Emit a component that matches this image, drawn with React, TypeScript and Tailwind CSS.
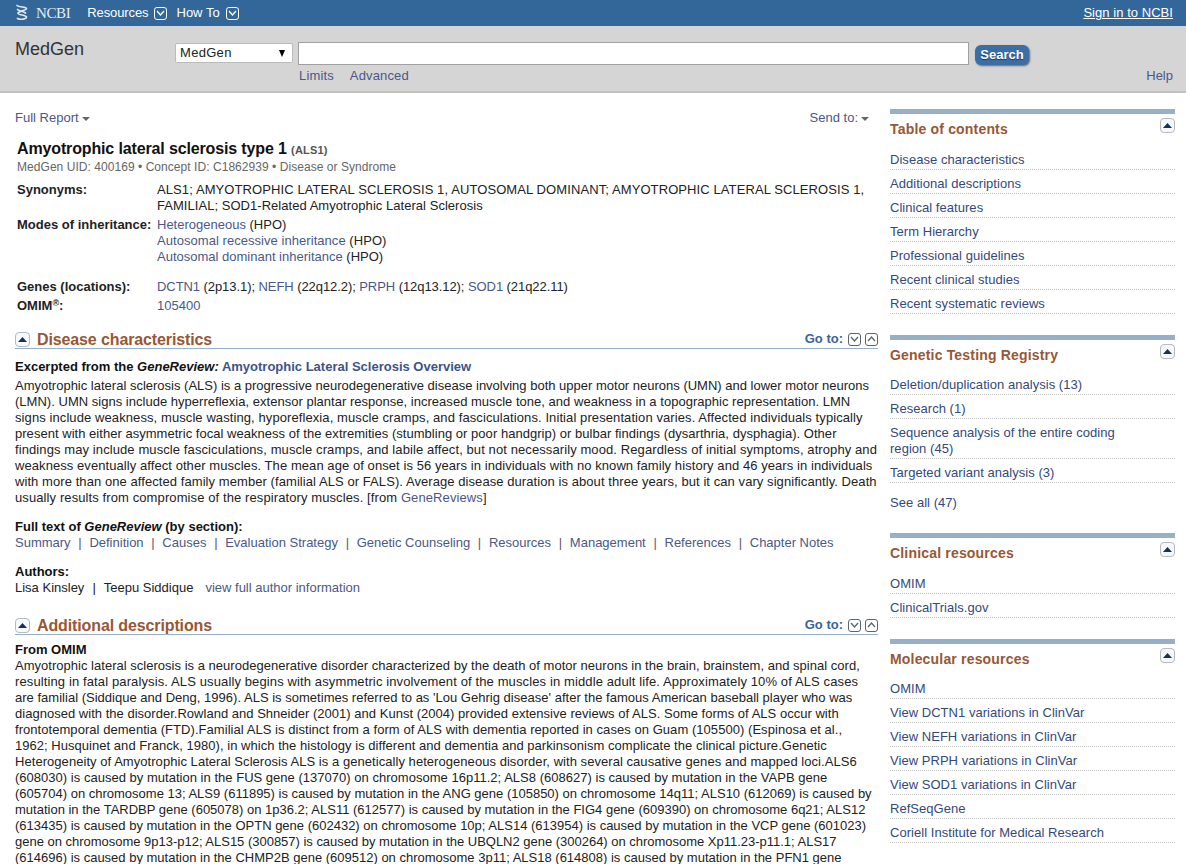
import React from 'react';

const Up = () => (
  <span className="flex h-[15px] w-[15px] items-center justify-center rounded-[4px] border border-[#b4b9c2] bg-[#f7f8fa]">
    <svg width="9" height="5" viewBox="0 0 9 5"><path d="M4.5 0L9 5H0z" fill="#14305f" /></svg>
  </span>
);

const Chevron = ({ up = false, color = '#5a6472', className = 'h-[13px] w-[13px]' }: { up?: boolean; color?: string; className?: string }) => (
  <span className={`flex items-center justify-center rounded-[3px] border ${className}`} style={{ borderColor: color }}>
    <svg width="9" height="6" viewBox="0 0 9 6" fill="none" stroke={color} strokeWidth="1.3">
      <path d={up ? 'M1 5l3.5-4L8 5' : 'M1 1l3.5 4L8 1'} />
    </svg>
  </span>
);

const Caret = () => <span className="ml-[3px] inline-block h-0 w-0 border-x-[4px] border-t-[4px] border-x-transparent border-t-[#666] align-middle" />;

const Link = ({ children }: { children: React.ReactNode }) => <a className="text-[#4a5888]">{children}</a>;

const SectionHeader = ({ title }: { title: string }) => (
  <div className="flex h-[19px] items-center border-b border-[#97b0c8]">
    <Up />
    <h2 className="ml-[7px] flex-1 pt-[1px] text-[16px] font-bold tracking-[-0.12px] text-[#985735]">{title}</h2>
    <span className="text-[13px] font-bold text-[#3a64a0]">Go to:</span>
    <span className="ml-[5px] flex gap-[4px]"><Chevron /><Chevron up /></span>
  </div>
);

const SideHead = ({ title, tight = false }: { title: string; tight?: boolean }) => (
  <>
    <div className="h-[5px] bg-[#97b0c8]" />
    <div className={`relative mt-[6px] h-[18px] text-[14px] font-bold leading-[18px] tracking-[0.18px] text-[#985735] ${tight ? 'mb-[7px]' : 'mb-[8px]'}`}>
      {title}
      <span className="absolute right-0 top-[-2px]"><Up /></span>
    </div>
  </>
);

const rowClass = 'border-b border-dotted border-[#c4c4c4] pb-[1px] pt-[6px]';

const SideBox = ({ title, items, tight }: { title: string; items: string[]; tight?: boolean }) => (
  <div className="mb-[21px]">
    <SideHead title={title} tight={tight} />
    <ul>
      {items.map((t) => (
        <li key={t} className={rowClass}>{t}</li>
      ))}
    </ul>
  </div>
);

const Sep = () => <span className="mx-[7.7px] text-[#5d5a70]">|</span>;

const sections = ['Summary', 'Definition', 'Causes', 'Evaluation Strategy', 'Genetic Counseling', 'Resources', 'Management', 'References', 'Chapter Notes'];

export default function App() {
  return (
    <div className="h-[864px] overflow-hidden bg-white text-[13px] leading-[16px] text-[#222]" style={{ fontFamily: '"Liberation Sans", Arial, sans-serif' }}>
      {/* top bar */}
      <div className="flex h-[26px] items-center bg-[#336699] pl-[15px] pr-[13px] text-[13px] text-white">
        <svg width="13" height="18" viewBox="0 0 13 18" fill="none" stroke="#dfe8f1" strokeWidth="1.7" strokeLinecap="round">
          <path d="M2 1.5c2 2 9 1 9.500 3 .4 2-8 2.500-8.500 4.500-.4 2 8 2 8.500 4 .4 2-6 3-9 1.500" />
          <path d="M2.500 5.500c1.500 1.500 6 2 8 3.500" />
        </svg>
        <span className="ml-[8px] text-[15px] tracking-[-0.4px] text-[#e6edf4]" style={{ fontFamily: '"Liberation Serif", serif' }}>NCBI</span>
        <span className="ml-[17px] tracking-[-0.1px]">Resources</span>
        <Chevron color="#fff" className="ml-[5px] h-[13px] w-[13px]" />
        <span className="ml-[10px]">How To</span>
        <Chevron color="#fff" className="ml-[6px] h-[13px] w-[13px]" />
        <a className="ml-auto tracking-[0.05px] underline">Sign in to NCBI</a>
      </div>

      {/* search bar */}
      <div className="flex h-[67px] border-b-2 border-[#c0c0c0] bg-[#d5d5d5] pl-[15px] pr-[13px]">
        <div className="w-[160px] pt-[13px] text-[18px] leading-[20px] text-[#333]">MedGen</div>
        <div className="pt-[16px]">
          <div className="flex items-start">
            <div className="mt-[1px] flex h-[20px] w-[118px] items-center justify-between rounded-[2px] border border-[#bbb] bg-white pl-[4px] pr-[7px] text-[13px] tracking-[0.3px] text-[#222]">
              MedGen
              <span className="h-0 w-0 border-x-[3.5px] border-t-[7px] border-x-transparent border-t-black" />
            </div>
            <div className="ml-[5px] h-[23px] w-[671px] border border-[#a0a0a0] bg-white" />
            <button className="ml-[6px] mt-[3px] h-[20px] w-[54px] rounded-[6px] bg-[#3a6ea5] text-[13px] font-bold text-white shadow-[1px_1px_2px_#666] [text-shadow:0_1px_1px_#1d3a5f]">Search</button>
          </div>
          <div className="ml-[124px] mt-[3px] flex gap-[16px] tracking-[0.15px] text-[#4a5888]">
            <span>Limits</span>
            <span>Advanced</span>
          </div>
        </div>
        <div className="ml-auto self-end pb-[7px] text-[#4a5888]">Help</div>
      </div>

      <div className="flex pl-[15px] pr-[11px] pt-[16px]">
        {/* main column */}
        <div className="w-[863px] shrink-0">
          <div className="flex justify-between pr-[9px] pt-[1px] text-[#4a5888]">
            <span>Full Report<Caret /></span>
            <span>Send to:<Caret /></span>
          </div>
          <h1 className="ml-[2px] mt-[13px] text-[16px] font-bold leading-[20px] tracking-[-0.14px] text-[#111]">
            Amyotrophic lateral sclerosis type 1 <span className="text-[11px] tracking-[0.2px] text-[#555]">(ALS1)</span>
          </h1>
          <div className="ml-[2px] text-[12px] leading-[15px] tracking-[0.05px] text-[#666]">MedGen UID: 400169 • Concept ID: C1862939 • Disease or Syndrome</div>

          <div className="ml-[2px] mt-[7px] grid grid-cols-[140px_1fr]">
            <b>Synonyms:</b>
            <div>
              <span className="block whitespace-nowrap tracking-[0.095px]">ALS1; AMYOTROPHIC LATERAL SCLEROSIS 1, AUTOSOMAL DOMINANT; AMYOTROPHIC LATERAL SCLEROSIS 1,</span>
              <span className="block tracking-[0.04px]">FAMILIAL; SOD1-Related Amyotrophic Lateral Sclerosis</span>
            </div>
            <b className="mt-[3px]">Modes of inheritance:</b>
            <div className="mt-[3px]">
              <Link>Heterogeneous</Link> (HPO)<br />
              <span className="tracking-[0.05px]"><Link>Autosomal recessive inheritance</Link> (HPO)</span><br />
              <Link>Autosomal dominant inheritance</Link> (HPO)
            </div>
            <b className="mt-[14px]">Genes (locations):</b>
            <div className="mt-[14px] tracking-[-0.07px]">
              <Link>DCTN1</Link> (2p13.1); <Link>NEFH</Link> (22q12.2); <Link>PRPH</Link> (12q13.12); <Link>SOD1</Link> (21q22.11)
            </div>
            <b className="mt-[3px]">OMIM<sup className="text-[9px]">®</sup>:</b>
            <div className="mt-[3px]"><Link>105400</Link></div>
          </div>

          <div className="mt-[16px]"><SectionHeader title="Disease characteristics" /></div>
          <div className="mt-[10px] font-bold text-[#111]">Excerpted from the <i>GeneReview:</i> <a className="text-[#3d5489]">Amyotrophic Lateral Sclerosis Overview</a></div>
          <div className="mt-[3px] whitespace-nowrap">
            <p>Amyotrophic lateral sclerosis (ALS) is a progressive neurodegenerative disease involving both upper motor neurons (UMN) and lower motor neurons</p>
            <p className="tracking-[0.02px]">(LMN). UMN signs include hyperreflexia, extensor plantar response, increased muscle tone, and weakness in a topographic representation. LMN</p>
            <p className="tracking-[0.09px]">signs include weakness, muscle wasting, hyporeflexia, muscle cramps, and fasciculations. Initial presentation varies. Affected individuals typically</p>
            <p className="tracking-[0.03px]">present with either asymmetric focal weakness of the extremities (stumbling or poor handgrip) or bulbar findings (dysarthria, dysphagia). Other</p>
            <p className="tracking-[0.095px]">findings may include muscle fasciculations, muscle cramps, and labile affect, but not necessarily mood. Regardless of initial symptoms, atrophy and</p>
            <p className="tracking-[0.07px]">weakness eventually affect other muscles. The mean age of onset is 56 years in individuals with no known family history and 46 years in individuals</p>
            <p className="tracking-[0.07px]">with more than one affected family member (familial ALS or FALS). Average disease duration is about three years, but it can vary significantly. Death</p>
            <p className="tracking-[0.1px]">usually results from compromise of the respiratory muscles. [from <Link>GeneReviews</Link>]</p>
          </div>
          <div className="mt-[13px] font-bold text-[#111]">Full text of <i>GeneReview</i> (by section):</div>
          <div className="text-[#4a5888]">
            {sections.map((s, i) => (
              <React.Fragment key={s}>{i > 0 && <Sep />}{s}</React.Fragment>
            ))}
          </div>
          <div className="mt-[13px] font-bold text-[#111]">Authors:</div>
          <div>Lisa Kinsley<span className="mx-[8px]">|</span>Teepu Siddique<a className="ml-[12px] text-[#4a5888]">view full author information</a></div>

          <div className="mt-[20px]"><SectionHeader title="Additional descriptions" /></div>
          <div className="mt-[7px] font-bold text-[#111]">From OMIM</div>
          <div className="whitespace-nowrap">
            <p className="tracking-[0.02px]">Amyotrophic lateral sclerosis is a neurodegenerative disorder characterized by the death of motor neurons in the brain, brainstem, and spinal cord,</p>
            <p className="tracking-[0.12px]">resulting in fatal paralysis. ALS usually begins with asymmetric involvement of the muscles in middle adult life. Approximately 10% of ALS cases</p>
            <p className="tracking-[0.015px]">are familial (Siddique and Deng, 1996). ALS is sometimes referred to as 'Lou Gehrig disease' after the famous American baseball player who was</p>
            <p className="tracking-[0.02px]">diagnosed with the disorder.Rowland and Shneider (2001) and Kunst (2004) provided extensive reviews of ALS. Some forms of ALS occur with</p>
            <p className="tracking-[0.05px]">frontotemporal dementia (FTD).Familial ALS is distinct from a form of ALS with dementia reported in cases on Guam (105500) (Espinosa et al.,</p>
            <p className="tracking-[0.035px]">1962; Husquinet and Franck, 1980), in which the histology is different and dementia and parkinsonism complicate the clinical picture.Genetic</p>
            <p className="tracking-[0.05px]">Heterogeneity of Amyotrophic Lateral Sclerosis ALS is a genetically heterogeneous disorder, with several causative genes and mapped loci.ALS6</p>
            <p className="tracking-[0.02px]">(608030) is caused by mutation in the FUS gene (137070) on chromosome 16p11.2; ALS8 (608627) is caused by mutation in the VAPB gene</p>
            <p>(605704) on chromosome 13; ALS9 (611895) is caused by mutation in the ANG gene (105850) on chromosome 14q11; ALS10 (612069) is caused by</p>
            <p>mutation in the TARDBP gene (605078) on 1p36.2; ALS11 (612577) is caused by mutation in the FIG4 gene (609390) on chromosome 6q21; ALS12</p>
            <p>(613435) is caused by mutation in the OPTN gene (602432) on chromosome 10p; ALS14 (613954) is caused by mutation in the VCP gene (601023)</p>
            <p className="tracking-[-0.015px]">gene on chromosome 9p13-p12; ALS15 (300857) is caused by mutation in the UBQLN2 gene (300264) on chromosome Xp11.23-p11.1; ALS17</p>
            <p>(614696) is caused by mutation in the CHMP2B gene (609512) on chromosome 3p11; ALS18 (614808) is caused by mutation in the PFN1 gene</p>
          </div>
        </div>

        {/* right column */}
        <div className="ml-[12px] w-[285px] shrink-0 tracking-[0.04px] text-[#34497a]">
          <SideBox title="Table of contents" items={['Disease characteristics', 'Additional descriptions', 'Clinical features', 'Term Hierarchy', 'Professional guidelines', 'Recent clinical studies', 'Recent systematic reviews']} />
          <div className="mb-[22px]">
            <SideHead tight title="Genetic Testing Registry" />
            <ul>
              <li className={rowClass}>Deletion/duplication analysis (13)</li>
              <li className={rowClass}>Research (1)</li>
              <li className={rowClass}>Sequence analysis of the entire coding<br />region (45)</li>
              <li className={rowClass}>Targeted variant analysis (3)</li>
            </ul>
            <div className="mt-[12px]">See all (47)</div>
          </div>
          <SideBox title="Clinical resources" items={['OMIM', 'ClinicalTrials.gov']} />
          <SideBox tight title="Molecular resources" items={['OMIM', 'View DCTN1 variations in ClinVar', 'View NEFH variations in ClinVar', 'View PRPH variations in ClinVar', 'View SOD1 variations in ClinVar', 'RefSeqGene', 'Coriell Institute for Medical Research']} />
        </div>
      </div>
    </div>
  );
}
